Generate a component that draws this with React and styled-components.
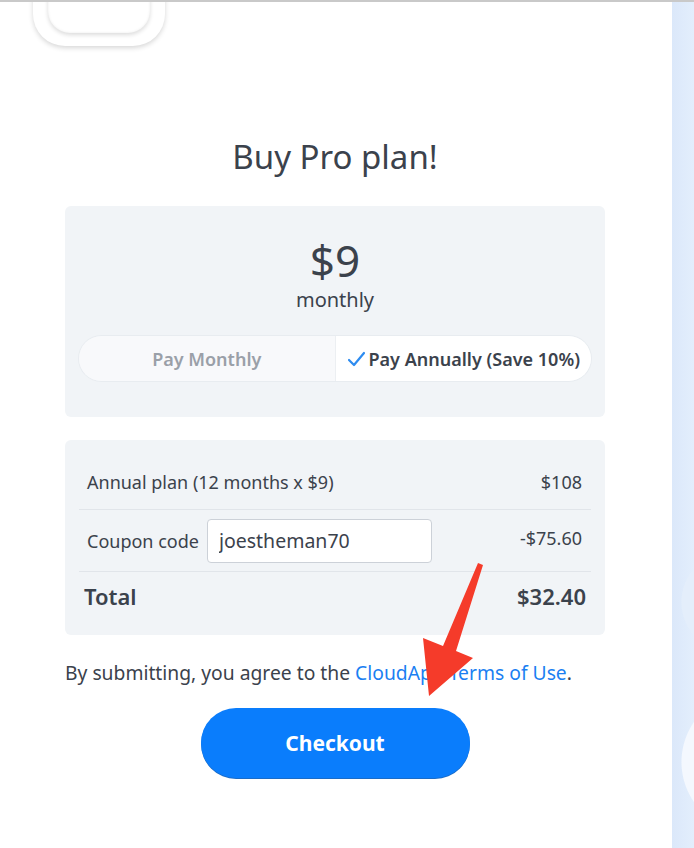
import React, { useState } from 'react';
import styled, { createGlobalStyle } from 'styled-components';

const GlobalStyle = createGlobalStyle`
    html, body {
        margin: 0;
        padding: 0;
        background: #ffffff;
        font-family: 'Noto Sans', 'Open Sans', sans-serif;
        color: #3b424c;
    }
    * {
        box-sizing: border-box;
    }
`;

const Page = styled.div`
    position: relative;
    display: flex;
    width: 694px;
    height: 848px;
    overflow: hidden;
    border-top: 2px solid #c9c9c9;
`;

const Main = styled.div`
    position: relative;
    width: 672px;
    display: flex;
    flex-direction: column;
    align-items: center;
    padding: 133px 2px 0 0;
    background: #ffffff;
`;

const SideStrip = styled.div`
    flex: 1;
    background:
        radial-gradient(circle at 80px 760px, #f4f8fe 0 70px, transparent 71px),
        radial-gradient(circle at 60px 600px, #e4eefb 0 50px, transparent 51px),
        linear-gradient(90deg, #dbe8fa, #e3eefc);
`;

const CloseGhost = styled.div`
    position: absolute;
    top: -42px;
    left: 33px;
    width: 132px;
    height: 86px;
    border-radius: 32px;
    background: #fff;
    box-shadow: 0 2px 5px rgba(0, 0, 0, 0.16);

    &::after {
        content: '';
        position: absolute;
        left: 15px;
        right: 15px;
        top: 0;
        bottom: 13px;
        border-radius: 22px;
        box-shadow: 0 2px 4px rgba(0, 0, 0, 0.14), inset 0 0 3px rgba(0, 0, 0, 0.08);
    }
`;

const Title = styled.h1`
    margin: 0 0 27px;
    font-size: 33px;
    line-height: 44px;
    font-weight: 400;
    color: #3b424c;
`;

const Card = styled.div`
    width: 540px;
    background: #f1f4f7;
    border-radius: 6px;
    padding: ${(p) => p.$padding};
    margin-top: ${(p) => p.$gap || 0}px;
`;

const PriceBlock = styled.div`
    display: flex;
    flex-direction: column;
    align-items: center;
`;

const Price = styled.div`
    font-size: 44px;
    line-height: 52px;
    color: #3b424c;
`;

const Period = styled.div`
    font-size: 20px;
    line-height: 28px;
    color: #3b424c;
    margin-bottom: 22px;
`;

const Toggle = styled.div`
    display: flex;
    height: 45px;
    border-radius: 23px;
    overflow: hidden;
    box-shadow: 0 0 0 1px #e8ecf0;
`;

const ToggleOption = styled.button`
    flex: 1;
    display: flex;
    align-items: center;
    justify-content: center;
    gap: 3px;
    border: none;
    padding: 0;
    font-family: inherit;
    font-size: 18px;
    font-weight: 600;
    cursor: pointer;
    background: ${(p) => (p.$active ? '#ffffff' : '#f8f9fb')};
    color: ${(p) => (p.$active ? '#3b424c' : '#9aa0a8')};
    border-left: ${(p) => (p.$active ? '1px solid #eceff2' : 'none')};
`;

const Table = styled.div`
    display: flex;
    flex-direction: column;
`;

const Row = styled.div`
    display: flex;
    align-items: center;
    justify-content: space-between;
    height: ${(p) => p.$height}px;
    padding: 0 9px 0 8px;
    border-bottom: ${(p) => (p.$last ? 'none' : '1px solid #e1e5ea')};
    font-size: 18px;
    color: #3b424c;
`;

const Label = styled.div`
    display: flex;
    align-items: center;
    gap: 8px;
`;

const Amount = styled.div`
    margin-top: ${(p) => p.$offset || 0}px;
`;

const CouponInput = styled.input`
    width: 225px;
    height: 44px;
    padding: 0 11px;
    border: 1px solid #ccd1d8;
    border-radius: 4px;
    background: #fff;
    font-family: inherit;
    font-size: 19.5px;
    color: #3b424c;
    outline: none;
`;

const TotalRow = styled(Row)`
    padding: 0 5px 0 5px;
    font-size: 22px;
    font-weight: 600;
`;

const Terms = styled.p`
    width: 540px;
    margin: 25px 0 0;
    font-size: 19.3px;
    line-height: 26px;
    color: #3b424c;
`;

const Link = styled.a`
    color: #1b7ff2;
    text-decoration: none;
`;

const CheckoutButton = styled.button`
    margin-top: 22px;
    width: 269px;
    height: 70px;
    border: none;
    border-radius: 35px;
    background: #0a7dfc;
    box-shadow: 0 1px 0 #1a6cc8;
    color: #fff;
    font-family: inherit;
    font-size: 21px;
    font-weight: 700;
    cursor: pointer;
`;

const ArrowOverlay = styled.svg`
    position: absolute;
    left: 0;
    top: 0;
    pointer-events: none;
`;

function CheckMark() {
    return (
        <svg width="19" height="16" viewBox="0 0 19 16">
            <path d="M2 9 L7 14 L17 2" fill="none" stroke="#2e8cf0" strokeWidth="2.2" strokeLinecap="round" strokeLinejoin="round" />
        </svg>
    );
}

function App() {
    const [annual, setAnnual] = useState(true);
    const [coupon, setCoupon] = useState('joestheman70');

    return (
        <>
            <GlobalStyle />
            <Page>
                <Main>
                    <CloseGhost />
                    <Title>Buy Pro plan!</Title>

                    <Card $padding="28px 14px 36px">
                        <PriceBlock>
                            <Price>$9</Price>
                            <Period>monthly</Period>
                        </PriceBlock>
                        <Toggle>
                            <ToggleOption $active={!annual} onClick={() => setAnnual(false)}>
                                {!annual && <CheckMark />}
                                Pay Monthly
                            </ToggleOption>
                            <ToggleOption $active={annual} onClick={() => setAnnual(true)}>
                                {annual && <CheckMark />}
                                Pay Annually (Save 10%)
                            </ToggleOption>
                        </Toggle>
                    </Card>

                    <Card $padding="15px 14px 15px" $gap={23}>
                        <Table>
                            <Row $height={55}>
                                <Label>Annual plan (12 months x $9)</Label>
                                <Amount>$108</Amount>
                            </Row>
                            <Row $height={62}>
                                <Label>
                                    Coupon code
                                    <CouponInput value={coupon} onChange={(e) => setCoupon(e.target.value)} />
                                </Label>
                                <Amount $offset={-6}>-$75.60</Amount>
                            </Row>
                            <TotalRow $height={48} $last>
                                <Label>Total</Label>
                                <Amount>$32.40</Amount>
                            </TotalRow>
                        </Table>
                    </Card>

                    <Terms>
                        By submitting, you agree to the <Link href="#">CloudApp Terms of Use</Link>.
                    </Terms>

                    <CheckoutButton>Checkout</CheckoutButton>
                </Main>
                <SideStrip />

                {/* annotation arrow drawn over the screenshot */}
                <ArrowOverlay width="694" height="848" viewBox="0 0 694 848">
                    <polygon
                        points="478,561 483,563 456,649 473,656 429,694 423,636 443,644"
                        fill="#f53b2a"
                    />
                </ArrowOverlay>
            </Page>
        </>
    );
}

export default App;
